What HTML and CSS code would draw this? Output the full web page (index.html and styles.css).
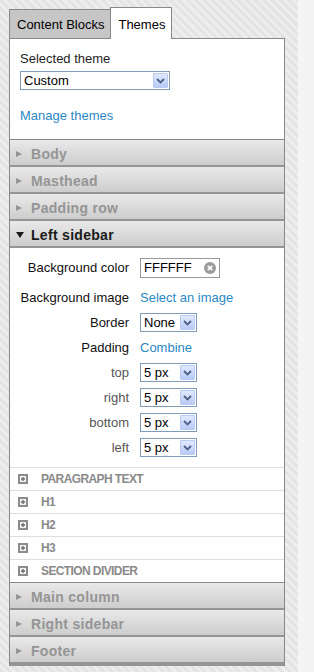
FILE: index.html
```html
<!DOCTYPE html>
<html lang="en">
<head>
    <meta charset="UTF-8">
    <meta name="viewport" content="width=device-width, initial-scale=1.0">
    <title>Theme Editor</title>
    <link rel="stylesheet" href="styles.css">
</head>
<body>
    <div class="layout">
        <div class="sidebar">
            <!-- Tabs -->
            <div class="tabs">
                <div class="tab tab-off">Content Blocks</div>
                <div class="tab">Themes</div>
                <div class="tab-fill"></div>
            </div>

            <div class="panel">
                <!-- Theme picker -->
                <div class="theme-box">
                    <div class="field-label">Selected theme</div>
                    <div class="select select-wide">
                        <span>Custom</span>
                        <i class="select-btn"><svg width="9" height="6" viewBox="0 0 9 6"><path d="M1 1 L4.5 4.5 L8 1" fill="none" stroke="#4d6185" stroke-width="1.8"/></svg></i>
                    </div>
                    <a class="link manage" href="#">Manage themes</a>
                </div>

                <!-- Sections -->
                <div class="sec-head"><span class="arrow"></span>Body</div>
                <div class="sec-head"><span class="arrow"></span>Masthead</div>
                <div class="sec-head"><span class="arrow"></span>Padding row</div>
                <div class="sec-head sec-open"><span class="arrow"></span>Left sidebar</div>
                <div class="sec-body">
                    <div class="props">
                        <div class="prop-label first">Background color</div>
                        <div class="first">
                            <div class="color-input">
                                <span>FFFFFF</span>
                                <svg width="12" height="12" viewBox="0 0 12 12"><circle cx="6" cy="6" r="6" fill="#9b9b9b"/><path d="M3.8 3.8 L8.2 8.2 M8.2 3.8 L3.8 8.2" stroke="#fff" stroke-width="1.8"/></svg>
                            </div>
                        </div>

                        <div class="prop-label">Background image</div>
                        <div><a class="link" href="#">Select an image</a></div>

                        <div class="prop-label">Border</div>
                        <div>
                            <div class="select select-small">
                                <span>None</span>
                                <i class="select-btn"><svg width="9" height="6" viewBox="0 0 9 6"><path d="M1 1 L4.5 4.5 L8 1" fill="none" stroke="#4d6185" stroke-width="1.8"/></svg></i>
                            </div>
                        </div>

                        <div class="prop-label">Padding</div>
                        <div><a class="link" href="#">Combine</a></div>

                        <div class="prop-label minor">top</div>
                        <div>
                            <div class="select select-small">
                                <span>5 px</span>
                                <i class="select-btn"><svg width="9" height="6" viewBox="0 0 9 6"><path d="M1 1 L4.5 4.5 L8 1" fill="none" stroke="#4d6185" stroke-width="1.8"/></svg></i>
                            </div>
                        </div>

                        <div class="prop-label minor">right</div>
                        <div>
                            <div class="select select-small">
                                <span>5 px</span>
                                <i class="select-btn"><svg width="9" height="6" viewBox="0 0 9 6"><path d="M1 1 L4.5 4.5 L8 1" fill="none" stroke="#4d6185" stroke-width="1.8"/></svg></i>
                            </div>
                        </div>

                        <div class="prop-label minor">bottom</div>
                        <div>
                            <div class="select select-small">
                                <span>5 px</span>
                                <i class="select-btn"><svg width="9" height="6" viewBox="0 0 9 6"><path d="M1 1 L4.5 4.5 L8 1" fill="none" stroke="#4d6185" stroke-width="1.8"/></svg></i>
                            </div>
                        </div>

                        <div class="prop-label minor">left</div>
                        <div>
                            <div class="select select-small">
                                <span>5 px</span>
                                <i class="select-btn"><svg width="9" height="6" viewBox="0 0 9 6"><path d="M1 1 L4.5 4.5 L8 1" fill="none" stroke="#4d6185" stroke-width="1.8"/></svg></i>
                            </div>
                        </div>
                    </div>

                    <!-- Sub elements -->
                    <div class="sub"><svg class="plus" width="10" height="10" viewBox="0 0 10 10"><rect width="10" height="10" fill="#8c8c8c"/><rect x="2" y="2" width="6" height="6" fill="#f2f2f2"/><path d="M5 3 V7 M3 5 H7" stroke="#6f6f6f" stroke-width="1.4"/></svg>Paragraph text</div>
                    <div class="sub"><svg class="plus" width="10" height="10" viewBox="0 0 10 10"><rect width="10" height="10" fill="#8c8c8c"/><rect x="2" y="2" width="6" height="6" fill="#f2f2f2"/><path d="M5 3 V7 M3 5 H7" stroke="#6f6f6f" stroke-width="1.4"/></svg>H1</div>
                    <div class="sub"><svg class="plus" width="10" height="10" viewBox="0 0 10 10"><rect width="10" height="10" fill="#8c8c8c"/><rect x="2" y="2" width="6" height="6" fill="#f2f2f2"/><path d="M5 3 V7 M3 5 H7" stroke="#6f6f6f" stroke-width="1.4"/></svg>H2</div>
                    <div class="sub"><svg class="plus" width="10" height="10" viewBox="0 0 10 10"><rect width="10" height="10" fill="#8c8c8c"/><rect x="2" y="2" width="6" height="6" fill="#f2f2f2"/><path d="M5 3 V7 M3 5 H7" stroke="#6f6f6f" stroke-width="1.4"/></svg>H3</div>
                    <div class="sub"><svg class="plus" width="10" height="10" viewBox="0 0 10 10"><rect width="10" height="10" fill="#8c8c8c"/><rect x="2" y="2" width="6" height="6" fill="#f2f2f2"/><path d="M5 3 V7 M3 5 H7" stroke="#6f6f6f" stroke-width="1.4"/></svg>Section divider</div>
                </div>
                <div class="sec-head"><span class="arrow"></span>Main column</div>
                <div class="sec-head"><span class="arrow"></span>Right sidebar</div>
                <div class="sec-head sec-last"><span class="arrow"></span>Footer</div>
            </div>
        </div>
        <div class="main"></div>
    </div>
</body>
</html>
```

FILE: styles.css
```css
/* Reset */
* {
    box-sizing: border-box;
    margin: 0;
    padding: 0;
}

body {
    font-family: "Liberation Sans", Arial, sans-serif;
    font-size: 13px;
    color: #1e1e1e;
    line-height: 16px;
}

.layout {
    display: flex;
    min-height: 672px;
}

/* Left column with striped background */
.sidebar {
    width: 298px;
    padding: 7px 13px 0 9px;
    background: repeating-linear-gradient(45deg, #e4e4e4 0, #e4e4e4 3px, #ededed 3px, #ededed 6px);
}

.main {
    flex: 1;
    background: #f4f4f4;
}

/* Tabs */
.tabs {
    display: flex;
    align-items: flex-end;
}

.tab {
    border: 1px solid #888;
    border-bottom: none;
    background: #fff;
    color: #000;
    padding: 9px 6px 6px 7px;
}

.tab-off {
    background: #c6c6c6;
    border-right: none;
    border-bottom: 1px solid #888;
    padding: 7px 6px 5px 7px;
}

.tab-fill {
    flex: 1;
    align-self: stretch;
    border-bottom: 1px solid #888;
}

/* Panel */
.panel {
    background: #fff;
    border-left: 1px solid #888;
    border-right: 1px solid #888;
}

.theme-box {
    padding: 12px 10px 15px;
    border-bottom: 1px solid #888;
}

.select {
    display: flex;
    align-items: center;
    justify-content: space-between;
    height: 19px;
    border: 1px solid #7f9db9;
    background: #fff;
    padding-left: 3px;
    color: #000;
    margin-top: 4px;
}

.select-wide {
    width: 150px;
}

.select-small {
    width: 57px;
    margin-top: 0;
}

.select-btn {
    display: flex;
    align-items: center;
    justify-content: center;
    width: 15px;
    height: 15px;
    margin-right: 1px;
    border: 1px solid #b9cbf3;
    border-radius: 1px;
    background: linear-gradient(#e0e9fe, #b8caf7);
}

.link {
    color: #2b88c4;
    text-decoration: none;
}

.manage {
    display: block;
    margin-top: 18px;
}

/* Section headers */
.sec-head {
    display: flex;
    align-items: center;
    height: 27px;
    padding: 3px 0 0 6px;
    border-bottom: 2px solid #959595;
    background: linear-gradient(#e9e9e9, #cdcdcd);
    font-size: 14px;
    font-weight: bold;
    letter-spacing: 0.3px;
    color: #959595;
}

.arrow {
    width: 0;
    height: 0;
    border-left: 6px solid #959595;
    border-top: 3.5px solid transparent;
    border-bottom: 3.5px solid transparent;
    margin-right: 9px;
}

.sec-open {
    color: #1a1a1a;
}

.sec-open .arrow {
    border-left: 4px solid transparent;
    border-right: 4px solid transparent;
    border-top: 6px solid #1a1a1a;
    border-bottom: none;
    margin-right: 7px;
}

.sec-last {
    height: 29px;
    border-bottom-width: 4px;
}

/* Open section */
.sec-body {
    border-bottom: 1px solid #888;
}

.props {
    display: grid;
    grid-template-columns: 119px 1fr;
    grid-template-rows: 30px;
    grid-auto-rows: 25px;
    column-gap: 11px;
    align-items: center;
    padding: 7px 0 7px;
}

.first {
    margin-bottom: 5px;
}

.prop-label {
    text-align: right;
    color: #111;
}

.minor {
    color: #555;
}

.color-input {
    display: flex;
    align-items: center;
    justify-content: space-between;
    width: 80px;
    height: 20px;
    border: 1px solid #999;
    padding: 0 3px 0 3px;
    color: #000;
}

.sub {
    display: flex;
    align-items: center;
    height: 23px;
    border-top: 1px solid #dedede;
    padding-left: 8px;
    font-size: 12px;
    font-weight: bold;
    letter-spacing: -0.6px;
    text-transform: uppercase;
    color: #8a8a8a;
}

.plus {
    margin-right: 13px;
}
```
